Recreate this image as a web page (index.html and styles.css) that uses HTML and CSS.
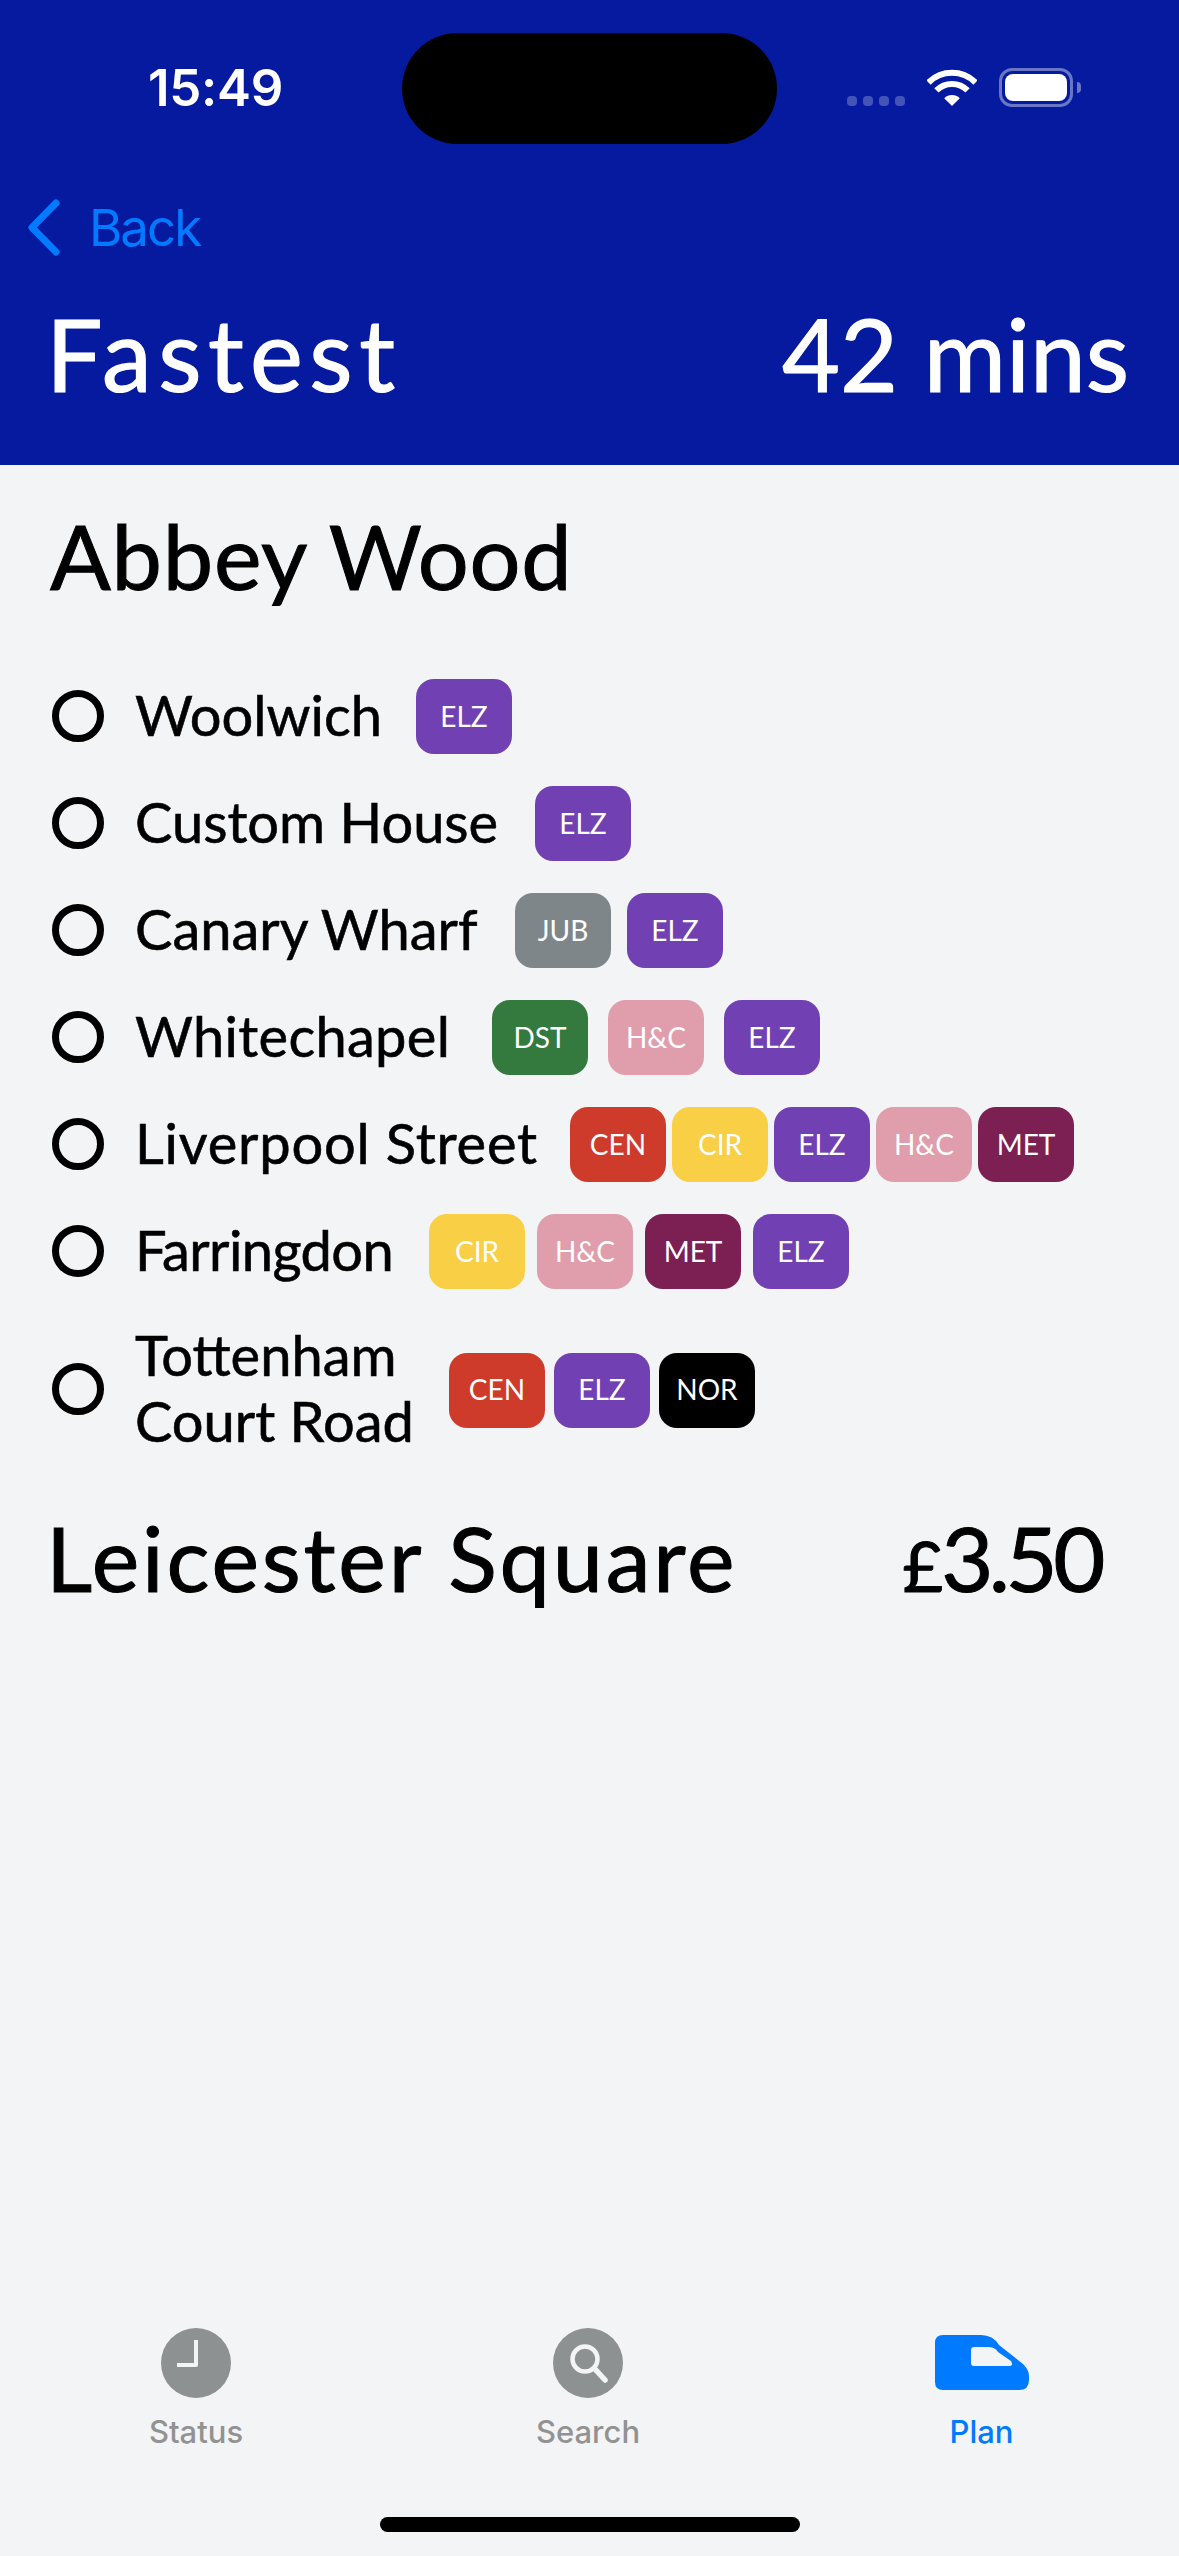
FILE: index.html
```html
<!DOCTYPE html>
<html lang="en">
<head>
    <meta charset="UTF-8">
    <title>Fastest route</title>
    <link rel="stylesheet" href="styles.css">
</head>
<body>

<div class="screen">
    <header class="route-header">
        <div class="status-bar">
            <span class="time">15:49</span>
            <div class="island"></div>
            <div class="status-icons">
                <div class="signal-dots"><i></i><i></i><i></i><i></i></div>
                <svg class="wifi" width="50" height="37" viewBox="0 0 50 37">
                    <path d="M1.5 13.5A33.3 33.3 0 0 1 48.5 13.5" fill="none" stroke="#fff" stroke-width="6"/>
                    <path d="M9.4 21.4A22 22 0 0 1 40.6 21.4" fill="none" stroke="#fff" stroke-width="6"/>
                    <path d="M25 37L17.2 29.2A11 11 0 0 1 32.8 29.2Z" fill="#fff"/>
                </svg>
                <div class="battery"><div class="battery-level"></div></div>
            </div>
        </div>
        <a class="back" href="#">
            <svg width="32" height="57" viewBox="0 0 32 57">
                <path d="M28 4L4 28.5L28 53" fill="none" stroke="#007aff" stroke-width="7" stroke-linecap="round" stroke-linejoin="round"/>
            </svg>
            <span>Back</span>
        </a>
        <div class="title-row">
            <span class="title-name">Fastest</span>
            <span>42 mins</span>
        </div>
    </header>

    <main class="journey">
        <h1 class="station">Abbey Wood</h1>
        <ul class="stops">
            <li class="stop stop-woolwich">
                <span class="dot"></span>
                <span class="stop-name">Woolwich</span>
                <div class="lines"><span class="line elz">ELZ</span></div>
            </li>
            <li class="stop stop-custom">
                <span class="dot"></span>
                <span class="stop-name">Custom House</span>
                <div class="lines"><span class="line elz">ELZ</span></div>
            </li>
            <li class="stop stop-canary">
                <span class="dot"></span>
                <span class="stop-name">Canary Wharf</span>
                <div class="lines">
                    <span class="line jub">JUB</span>
                    <span class="line elz">ELZ</span>
                </div>
            </li>
            <li class="stop stop-whitechapel">
                <span class="dot"></span>
                <span class="stop-name">Whitechapel</span>
                <div class="lines">
                    <span class="line dst">DST</span>
                    <span class="line hc">H&amp;C</span>
                    <span class="line elz">ELZ</span>
                </div>
            </li>
            <li class="stop stop-liverpool">
                <span class="dot"></span>
                <span class="stop-name">Liverpool Street</span>
                <div class="lines">
                    <span class="line cen">CEN</span>
                    <span class="line cir">CIR</span>
                    <span class="line elz">ELZ</span>
                    <span class="line hc">H&amp;C</span>
                    <span class="line met">MET</span>
                </div>
            </li>
            <li class="stop stop-farringdon">
                <span class="dot"></span>
                <span class="stop-name">Farringdon</span>
                <div class="lines">
                    <span class="line cir">CIR</span>
                    <span class="line hc">H&amp;C</span>
                    <span class="line met">MET</span>
                    <span class="line elz">ELZ</span>
                </div>
            </li>
            <li class="stop stop-tottenham">
                <span class="dot"></span>
                <span class="stop-name">Tottenham<br>Court Road</span>
                <div class="lines">
                    <span class="line cen">CEN</span>
                    <span class="line elz">ELZ</span>
                    <span class="line nor">NOR</span>
                </div>
            </li>
        </ul>
        <div class="destination">
            <span>Leicester Square</span>
            <span class="fare"><span class="pound">£</span>3.50</span>
        </div>
    </main>

    <nav class="tabs">
        <a class="tab" href="#">
            <svg width="70" height="70" viewBox="0 0 70 70">
                <circle cx="35" cy="35" r="35" fill="#8e9192"/>
                <path d="M35 12V37H16" fill="none" stroke="#f3f4f6" stroke-width="4" stroke-linejoin="round"/>
            </svg>
            <span>Status</span>
        </a>
        <a class="tab" href="#">
            <svg width="70" height="70" viewBox="0 0 70 70">
                <circle cx="35" cy="35" r="35" fill="#8e9192"/>
                <circle cx="32" cy="31" r="12.5" fill="none" stroke="#f3f4f6" stroke-width="4.5"/>
                <path d="M41.5 40.5L52 52" fill="none" stroke="#f3f4f6" stroke-width="5.5" stroke-linecap="round"/>
            </svg>
            <span>Search</span>
        </a>
        <a class="tab tab-active" href="#">
            <svg width="94" height="70" viewBox="0 0 94 70">
                <path d="M8 7H46Q58 7 64 17L88 36Q94 42 94 48V52Q94 62 84 62H8Q0 62 0 54V15Q0 7 8 7Z" fill="#007aff"/>
                <path d="M39 19H53Q60 19 63 24L76 33Q79 38 74 38H39Q36 38 36 35V22Q36 19 39 19Z" fill="#f3f4f6"/>
            </svg>
            <span>Plan</span>
        </a>
    </nav>
    <div class="home-bar"><div class="home-indicator"></div></div>
</div>

</body>
</html>
```

FILE: styles.css
```css
* {
    box-sizing: border-box;
}

body {
    margin: 0;
    background-color: #f3f4f6;
    font-family: "Lato", "Noto Sans", sans-serif;
    color: #000;
}

a {
    text-decoration: none;
}

.screen {
    display: flex;
    flex-direction: column;
    height: 2556px;
    overflow: hidden;
}

.route-header {
    height: 465px;
    background-color: #051a9f;
    color: #fff;
    flex-shrink: 0;
}

.status-bar {
    position: relative;
    display: flex;
    justify-content: space-between;
    align-items: center;
    height: 174px;
    padding: 0 98px 0 148px;
}

.time {
    font-family: "Inter", sans-serif;
    font-size: 51px;
    font-weight: 600;
    letter-spacing: -0.3px;
}

.island {
    position: absolute;
    left: 402px;
    top: 33px;
    width: 375px;
    height: 111px;
    border-radius: 56px;
    background-color: #000;
}

.status-icons {
    display: flex;
    align-items: flex-end;
    gap: 22px;
}

.signal-dots {
    display: flex;
    gap: 6px;
    margin-bottom: 1px;
}

.signal-dots i {
    width: 10px;
    height: 10px;
    border-radius: 4px;
    background-color: rgba(255, 255, 255, 0.25);
}

.wifi {
    display: block;
    margin-bottom: 1px;
}

.battery {
    position: relative;
    width: 74px;
    height: 39px;
    padding: 3px;
    border: 3px solid rgba(255, 255, 255, 0.4);
    border-radius: 13px;
    margin-right: 8px;
}

.battery::after {
    content: "";
    position: absolute;
    right: -11px;
    top: 11px;
    width: 4px;
    height: 11px;
    border-radius: 0 4px 4px 0;
    background-color: rgba(255, 255, 255, 0.4);
}

.battery-level {
    height: 100%;
    border-radius: 8px;
    background-color: #fff;
}

.back {
    display: flex;
    align-items: center;
    gap: 29px;
    height: 106px;
    padding-left: 28px;
    color: #007aff;
    font-family: "Inter", sans-serif;
    font-size: 51px;
    letter-spacing: -2px;
}

.title-row {
    display: flex;
    justify-content: space-between;
    padding: 0 50px 0 46px;
    font-size: 100px;
    line-height: 146px;
    -webkit-text-stroke: 1.2px #fff;
}

.title-name {
    letter-spacing: 6.5px;
}

.journey {
    flex: 1;
    padding: 0 50px;
}

.station {
    margin: 35px 0 0;
    font-size: 90px;
    font-weight: 400;
    line-height: 110px;
    letter-spacing: 0.8px;
    -webkit-text-stroke: 1px #000;
}

.stops {
    list-style: none;
    margin: 69px 0 0;
    padding: 0;
    display: flex;
    flex-direction: column;
    gap: 32px;
}

.stop {
    display: flex;
    align-items: center;
    min-height: 75px;
}

.dot {
    width: 52px;
    height: 52px;
    margin-left: 2px;
    margin-bottom: 2px;
    border: 7px solid #000;
    border-radius: 50%;
    flex-shrink: 0;
}

.stop-name {
    margin-left: 31px;
    margin-bottom: 4px;
    font-size: 56px;
    line-height: 66px;
    -webkit-text-stroke: 0.6px #000;
}

.lines {
    display: flex;
}

.line {
    display: flex;
    justify-content: center;
    align-items: center;
    width: 96px;
    height: 75px;
    padding-bottom: 2px;
    border-radius: 18px;
    color: #fff;
    font-size: 28px;
}

.stop-woolwich .stop-name { width: 281px; }
.stop-custom .stop-name { width: 400px; }
.stop-canary .stop-name { width: 380px; }
.stop-whitechapel .stop-name { width: 357px; letter-spacing: 0.3px; }
.stop-liverpool .stop-name { width: 435px; letter-spacing: 0.8px; }
.stop-farringdon .stop-name { width: 294px; letter-spacing: -0.6px; }
.stop-tottenham .stop-name { width: 314px; }

.stop-canary .lines { gap: 16px; }
.stop-whitechapel .lines { gap: 20px; }
.stop-liverpool .lines { gap: 6px; }
.stop-farringdon .lines { gap: 12px; }
.stop-tottenham .lines { gap: 9px; }

.stop-tottenham {
    margin-top: 1px;
}

.elz { background-color: #7140b3; }
.jub { background-color: #7f868a; }
.dst { background-color: #34793e; }
.hc { background-color: #e09dac; }
.cen { background-color: #cf3b2b; }
.cir { background-color: #f8cf45; }
.met { background-color: #7c1f52; }
.nor { background-color: #000; }

.destination {
    display: flex;
    justify-content: space-between;
    margin: 44px 0 0 -4px;
    padding-right: 28px;
    font-size: 90px;
    line-height: 110px;
    letter-spacing: 2.8px;
    -webkit-text-stroke: 1px #000;
}

.fare {
    letter-spacing: -4.5px;
}

.pound {
    font-size: 70px;
    letter-spacing: -2px;
}

.tabs {
    display: grid;
    grid-template-columns: 392px 392px 395px;
    flex-shrink: 0;
}

.tab {
    display: flex;
    flex-direction: column;
    align-items: center;
    color: #929292;
    font-family: "Inter", sans-serif;
    font-size: 31px;
    font-weight: 500;
}

.tab svg {
    display: block;
}

.tab span {
    margin-top: 15px;
    line-height: 38px;
}

.tab-active {
    color: #007aff;
}

.home-bar {
    display: flex;
    justify-content: center;
    flex-shrink: 0;
    padding: 66px 0 24px;
}

.home-indicator {
    width: 420px;
    height: 15px;
    border-radius: 8px;
    background-color: #000;
}
```
